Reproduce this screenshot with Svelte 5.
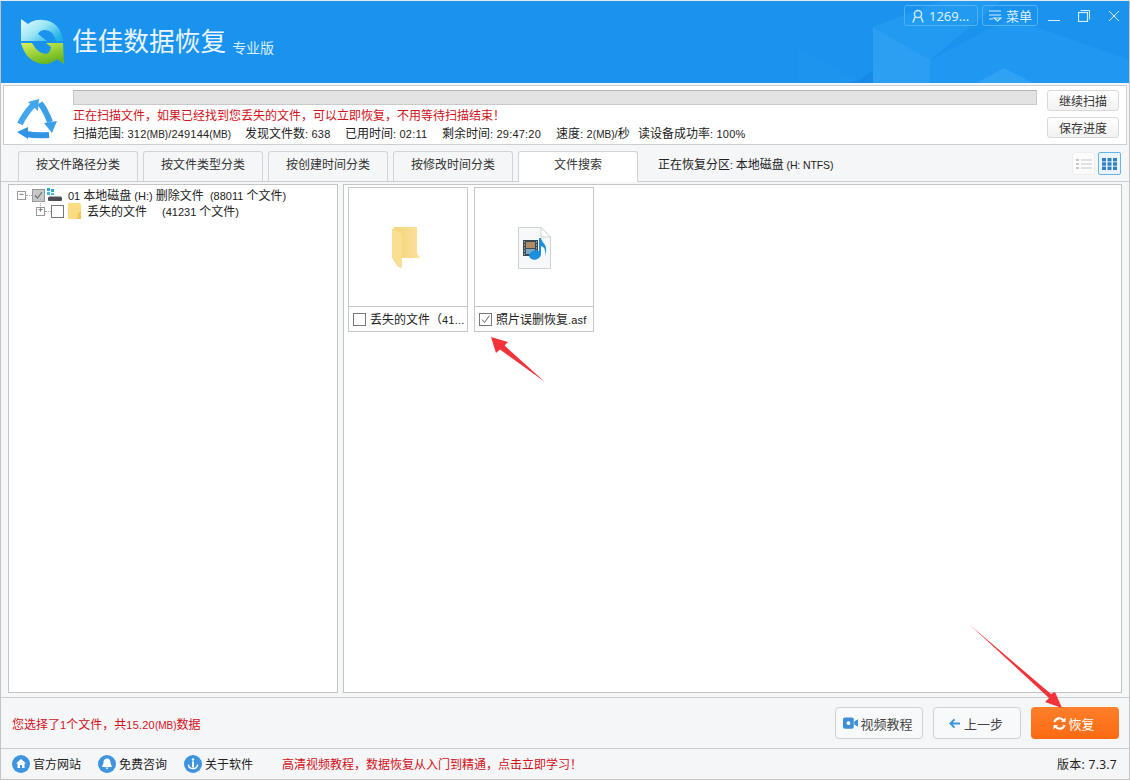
<script>
let tabs = ['按文件路径分类', '按文件类型分类', '按创建时间分类', '按修改时间分类', '文件搜索']
let active = 4
let stats = [
  ['扫描范围: 312(MB)/249144(MB)', 172],
  ['发现文件数: 638', 100],
  ['已用时间: 02:11', 97],
  ['剩余时间: 29:47:20', 114],
  ['速度: 2(MB)/秒', 82],
  ['读设备成功率: 100%', 120]
]

// latin runs are set smaller than the cjk around them, (MB) smaller still
function runs(s) {
  return s.split(/(\(MB\)|(?:(?!\(MB\))[\x20-\x7e])+)/)
}
</script>

{#snippet mix(text)}
  {#each runs(text) as r, i}{#if i % 2}<span class="n" class:mb={r === '(MB)'}>{r}</span>{:else}{r}{/if}{/each}
{/snippet}

<div class="win">
  <header class="head">
    <svg class="cubes" width="1128" height="82" viewBox="0 1 1128 82">
      <path d="M797 48 L857 81 L857 83 L797 83 Z" fill="#1d95ee" />
      <path d="M857 81 L872 70 L872 83 L845 83 Z" fill="#1889e6" />
      <path d="M872 27 L940 1 L1000 1 L929 60 Z" fill="#219af2" />
      <path d="M872 27 L929 60 L929 83 L872 83 Z" fill="#2d9ff3" />
      <path d="M929 60 L1010 18 L1128 60 L1128 83 L929 83 Z" fill="#1f98f1" />
      <path d="M975 83 L1003 68 L1032 83 Z" fill="#2fa2f4" />
    </svg>
    <svg class="logo" width="46" height="50" viewBox="20 17 46 50">
      <defs>
        <linearGradient id="lgTop" x1="0" y1="0" x2="1" y2=".7">
          <stop offset="0" stop-color="#e6fcfd" />
          <stop offset=".5" stop-color="#9fe6f5" />
          <stop offset="1" stop-color="#22b2e4" />
        </linearGradient>
        <linearGradient id="lgBot" x1="0" y1="0" x2=".5" y2="1">
          <stop offset="0" stop-color="#d6f05c" />
          <stop offset="1" stop-color="#69b61c" />
        </linearGradient>
      </defs>
      <path d="M21 19 L28 24 Q35 19 43 20 Q60 21 63 41 L56 41 Q53 30 45 30 Q40 30 38 34 L47 41 L21 41 Z" fill="url(#lgTop)" />
      <path d="M21 43 H32 Q38 54 46 54 Q50 53 51 47 L46 43 H63 L64 64 L57 59 Q50 65 43 64 Q26 62 21 43 Z" fill="url(#lgBot)" />
    </svg>
    <span class="brand">佳佳数据恢复</span>
    <span class="edition">专业版</span>
    <div class="winbtns">
      <button class="hbtn user">
        <svg width="14" height="14" viewBox="0 0 14 14" fill="none" stroke="#cfe9fd" stroke-width="1.5"><circle cx="7" cy="5" r="3.6" /><path d="M2 13.5 L4 8 M12 13.5 L10 8" /></svg>
        1269...
      </button>
      <button class="hbtn menu">
        <svg width="14" height="13" viewBox="0 0 14 13" fill="none" stroke="#cfe9fd" stroke-width="1.2"><path d="M1 2 H13 M1 6 H13 M1 10 H5 M6 9 H13 L9.5 12 Z" /></svg>
        菜单
      </button>
      <svg class="ctl" width="12" height="12" viewBox="0 0 12 12" stroke="#d6edfe" fill="none"><path d="M0 10.5 H12" /></svg>
      <svg class="ctl" width="12" height="12" viewBox="0 0 12 12" stroke="#d6edfe" fill="none"><rect x=".5" y="2.5" width="9" height="9" stroke-width="1.2" /><path d="M2.5 .5 H11.5 V9.5" /></svg>
      <svg class="ctl" width="12" height="12" viewBox="0 0 12 12" stroke="#d6edfe" fill="none"><path d="M1 1 L11 11 M11 1 L1 11" /></svg>
    </div>
  </header>

  <section class="scan">
    <svg class="scanicon" width="46" height="46" viewBox="0 0 46 46" fill="#3a9fe8">
      <path d="M4 27 Q8 18 17 8" fill="none" stroke="#42a6ec" stroke-width="6" />
      <path d="M12 5 L23 2 L22 14 Z" fill="#42a6ec" />
      <path d="M24 6 Q30 14 34 25" fill="none" stroke="#3a9fe8" stroke-width="6" />
      <path d="M28 26 L41 24 L36 36 Z" />
      <path d="M33 38 Q20 39 10 37" fill="none" stroke="#3194e4" stroke-width="6" />
      <path d="M12 30 L1 35 L12 42 Z" fill="#3194e4" />
    </svg>
    <div class="scanbody">
      <div class="progress"></div>
      <div class="notice">正在扫描文件，如果已经找到您丢失的文件，可以立即恢复，不用等待扫描结束！</div>
      <div class="stats">
        {#each stats as s}
          <div class="stat" style="width:{s[1]}px">{@render mix(s[0])}</div>
        {/each}
      </div>
    </div>
    <div class="scanbtns">
      <button class="sbtn">继续扫描</button>
      <button class="sbtn">保存进度</button>
    </div>
  </section>

  <nav class="tabbar">
    {#each tabs as t, i}
      <div class="tab" class:on={i === active}>{t}</div>
    {/each}
    <span class="part">{@render mix('正在恢复分区: 本地磁盘 (H: NTFS)')}</span>
    <div class="views">
      <div class="view">
        <svg width="16" height="12" viewBox="0 0 16 12" fill="#c4c8cc"><rect x="0" y="1" width="3" height="2" /><rect x="0" y="5" width="3" height="2" /><rect x="0" y="9" width="3" height="2" /><rect x="5" y="1.5" width="11" height="1" /><rect x="5" y="5.5" width="11" height="1" /><rect x="5" y="9.5" width="11" height="1" /></svg>
      </div>
      <div class="view on">
        <svg width="15" height="12" viewBox="0 0 15 12" fill="#2f80c8"><rect x="0" y="0" width="4" height="3.4" /><rect x="5.5" y="0" width="4" height="3.4" /><rect x="11" y="0" width="4" height="3.4" /><rect x="0" y="4.3" width="4" height="3.4" /><rect x="5.5" y="4.3" width="4" height="3.4" /><rect x="11" y="4.3" width="4" height="3.4" /><rect x="0" y="8.6" width="4" height="3.4" /><rect x="5.5" y="8.6" width="4" height="3.4" /><rect x="11" y="8.6" width="4" height="3.4" /></svg>
      </div>
    </div>
  </nav>

  <main class="work">
    <aside class="tree">
      <div class="row">
        <span class="exp">−</span>
        <span class="dots"></span>
        <span class="chk grey">
          <svg width="11" height="11" viewBox="0 0 11 11" fill="none" stroke="#6f6f6f" stroke-width="1.2"><path d="M2 5.5 L4.5 8 L9 2" /></svg>
        </span>
        <svg class="disk" width="15" height="14" viewBox="0 0 15 14"><rect x="0" y="0" width="3" height="3" fill="#2aa6d8" /><rect x="4" y="1" width="3" height="3" fill="#2aa6d8" /><rect x="0" y="4" width="3" height="3" fill="#46b8e2" /><rect x="4" y="5" width="3" height="2" fill="#46b8e2" /><rect x="1" y="9" width="14" height="4" rx="1" fill="#4b4f55" /><rect x="2" y="8" width="12" height="1" fill="#a9adb2" /></svg>
        <span class="name">{@render mix('01 本地磁盘 (H:) 删除文件  (88011 个文件)')}</span>
      </div>
      <div class="row sub">
        <span class="exp">+</span>
        <span class="dots"></span>
        <span class="chk"></span>
        <svg class="mini" width="13" height="16" viewBox="0 0 13 16"><path d="M0 1 Q0 0 1 0 H11 Q13 0 13 2 V16 H1 Q0 16 0 15 Z" fill="#fbdc83" /><path d="M10 10 L13 8 V16 H9 Z" fill="#f3c558" /></svg>
        <span class="name lost">丢失的文件</span>
        <span class="name">{@render mix('(41231 个文件)')}</span>
      </div>
    </aside>

    <div class="files">
      <div class="tile">
        <div class="thumb">
          <svg class="folder" width="28" height="41" viewBox="0 0 28 41">
            <defs>
              <linearGradient id="fb" x1="0" y1="0" x2="1" y2="0">
                <stop offset="0" stop-color="#f5d377" />
                <stop offset="1" stop-color="#fbe29c" />
              </linearGradient>
            </defs>
            <path d="M2 0 H25 V26 L28 31 H2 Z" fill="url(#fb)" />
            <path d="M0 1 L10 7 V41 L6 40 L0 31 Z" fill="#fadf92" />
          </svg>
        </div>
        <div class="cap">
          <span class="chk"></span>
          <span class="capt">丢失的文件（{@render mix('41...')}</span>
        </div>
      </div>
      <div class="tile">
        <div class="thumb">
          <svg class="media" width="33" height="42" viewBox="0 0 33 42">
            <path d="M.5 .5 H23 L32.5 10 V41.5 H.5 Z" fill="#f7f8fa" stroke="#cfd1d3" />
            <path d="M23 .5 V10 H32.5 Z" fill="#fff" stroke="#cfd1d3" />
            <rect x="5" y="13" width="15" height="16" fill="#3a4a55" />
            <rect x="8" y="15" width="9" height="6" fill="#b28a66" />
            <rect x="8" y="22" width="9" height="5" fill="#7fa9c2" />
            <path d="M6 15 H7 M6 18 H7 M6 21 H7 M6 24 H7 M6 27 H7 M18 15 H19 M18 18 H19 M18 21 H19 M18 24 H19 M18 27 H19" stroke="#dfe5ea" />
            <ellipse cx="17" cy="28" rx="6" ry="4.6" fill="#1d8fdc" transform="rotate(-15 17 28)" />
            <path d="M21 11 H23 C24 17 31 17 27 29 C28 22 26 20 23 19 V28 H21 Z" fill="#1d8fdc" />
          </svg>
        </div>
        <div class="cap">
          <span class="chk">
            <svg width="11" height="11" viewBox="0 0 11 11" fill="none" stroke="#666" stroke-width="1"><path d="M2 5.5 L4.5 8.5 L9.5 1.5" /></svg>
          </span>
          <span class="capt">{@render mix('照片误删恢复.asf')}</span>
        </div>
      </div>
    </div>
  </main>

  <div class="action">
    <span class="picked">{@render mix('您选择了1个文件，共15.20(MB)数据')}</span>
    <button class="abtn">
      <svg width="15" height="12" viewBox="0 0 16 12" fill="#3f8fd6"><rect x="0" y="0" width="11.5" height="12" rx="2" /><path d="M12 4.5 L16 2 V10 L12 7.5 Z" /><circle cx="5.8" cy="6" r="2" fill="#fff" /></svg>
      视频教程
    </button>
    <button class="abtn">
      <svg width="11" height="11" viewBox="0 0 12 11" fill="none" stroke="#3f94e0" stroke-width="2.2"><path d="M6 1 L1.5 5.5 L6 10 M2 5.5 H12" /></svg>
      <span class="stepl">上一步</span>
    </button>
    <button class="abtn go">
      <svg width="13" height="13" viewBox="0 0 13 13" fill="none" stroke="#fff" stroke-width="2.2"><path d="M1.5 5 A5 5 0 0 1 10.5 3.5 M11.5 8 A5 5 0 0 1 2.5 9.5" /><path d="M12.5 .5 V5 H8 Z M.5 12.5 V8 H5 Z" fill="#fff" stroke="none" /></svg>
      恢复
    </button>
  </div>

  <footer class="status">
    <span class="link">
      <svg width="18" height="18" viewBox="0 0 18 18"><circle cx="9" cy="9" r="9" fill="#3f94e0" /><path d="M9 4 L14 8.5 H12.5 V13 H10 V10 H8 V13 H5.5 V8.5 H4 Z" fill="#fff" /></svg>
      官方网站
    </span>
    <span class="link">
      <svg width="18" height="18" viewBox="0 0 18 18"><circle cx="9" cy="9" r="9" fill="#3f94e0" /><path d="M9 3.5 C12 3.5 12.5 6 12.5 8 L14 12 H4 L5.5 8 C5.5 6 6 3.5 9 3.5 Z M7.5 12.5 H10.5 L9 14.5 Z" fill="#fff" /></svg>
      免费咨询
    </span>
    <span class="link">
      <svg width="18" height="18" viewBox="0 0 18 18"><circle cx="9" cy="9" r="9" fill="#3f94e0" /><circle cx="9" cy="4.5" r="1.2" fill="#fff" /><rect x="8" y="6.5" width="2" height="6" fill="#fff" /><path d="M4.5 9.5 C4.5 15 13.5 15 13.5 9.5" fill="none" stroke="#fff" stroke-width="1.4" /></svg>
      关于软件
    </span>
    <span class="promo">高清视频教程，数据恢复从入门到精通，点击立即学习！</span>
    <span class="version">版本: 7.3.7</span>
  </footer>

  <svg class="pointer" width="1128" height="778" viewBox="1 1 1128 778">
    <path d="M491 337 L508 342 L504.5 345.5 L545 382 L500 349.5 L496 353 Z" fill="#f2333a" />
    <path d="M970 625 L1051 694 L1055 692 L1062 708 L1045 702 L1049 698 Z" fill="#f2333a" />
  </svg>
</div>

<style>
:global(body) {
  margin: 0;
  background: #fff;
}
.win {
  position: relative;
  box-sizing: border-box;
  width: 1130px;
  height: 780px;
  display: flex;
  flex-direction: column;
  border: 1px solid #c4c4c4;
  border-top-color: #e8e8e8;
  background: #f5f6f8;
  font-family: "Noto Sans", "Noto Sans CJK SC", sans-serif;
  font-size: 12px;
  color: #222;
  overflow: hidden;
}
.n {
  font-family: "Liberation Sans", sans-serif;
  font-size: 11px;
  letter-spacing: .2px;
  white-space: pre;
}
.n.mb {
  font-size: 10px;
  letter-spacing: 0;
}
.part .n {
  letter-spacing: -.1px;
  font-size: 10.5px;
}
.name .n {
  letter-spacing: 0;
}
button {
  font: inherit;
  padding: 0;
  cursor: pointer;
}
.head {
  position: relative;
  height: 82px;
  flex: none;
  display: flex;
  align-items: flex-start;
  background: #1a93ef;
  color: #fff;
}
.cubes {
  position: absolute;
  left: 0;
  top: 0;
}
.logo {
  position: relative;
  margin: 16px 0 0 19px;
}
.brand {
  position: relative;
  margin: 21px 0 0 6px;
  font-size: 25.7px;
  line-height: 40px;
  color: #eaf6ff;
}
.edition {
  position: relative;
  margin: 37px 0 0 6px;
  font-size: 14px;
  line-height: 20px;
  color: #d8eefe;
}
.winbtns {
  position: absolute;
  right: 9px;
  top: 4px;
  display: flex;
  align-items: center;
}
.hbtn {
  height: 21px;
  display: flex;
  align-items: center;
  gap: 4px;
  box-sizing: border-box;
  border: 1px solid #55b0f2;
  border-radius: 3px;
  background: transparent;
  color: #dcf0ff;
  font-size: 13px;
}
.user {
  width: 74px;
  padding-left: 6px;
  margin-right: 4px;
}
.menu {
  width: 56px;
  padding-left: 5px;
  margin-right: 10px;
}
.ctl {
  margin-right: 18px;
}
.ctl:last-child {
  margin-right: 0;
}
.scan {
  flex: none;
  height: 60px;
  box-sizing: border-box;
  margin: 2px 2px 0;
  display: flex;
  background: #fff;
  border: 1px solid #cdcdcd;
}
.scanicon {
  flex: none;
  margin: 11px 11px 0 12px;
}
.scanbody {
  flex: 1;
  min-width: 0;
}
.progress {
  height: 15px;
  box-sizing: border-box;
  margin-top: 4px;
  background: #e3e3e3;
  border: 1px solid #c9c9c9;
  border-top-color: #b5b5b5;
}
.notice {
  margin-top: 2px;
  line-height: 18px;
  color: #d1101a;
}
.stats {
  display: flex;
  line-height: 18px;
  white-space: nowrap;
}
.stat {
  flex: none;
}
.scanbtns {
  flex: none;
  width: 72px;
  margin: 4px 7px 0 10px;
  display: flex;
  flex-direction: column;
  gap: 6px;
}
.sbtn {
  height: 21px;
  border: 1px solid #d9d9d9;
  border-radius: 3px;
  background: linear-gradient(#fff, #f2f2f2);
  color: #333;
}
.tabbar {
  flex: none;
  height: 30px;
  margin-top: 6px;
  padding-left: 17px;
  display: flex;
  gap: 5px;
  align-items: flex-start;
  position: relative;
}
.tab {
  width: 120px;
  height: 30px;
  box-sizing: border-box;
  border: 1px solid #d3d3d3;
  border-bottom: 0;
  border-radius: 3px 3px 0 0;
  text-align: center;
  line-height: 26px;
  background: #f5f6f8;
  color: #333;
}
.tab.on {
  position: relative;
  z-index: 1;
  height: 31px;
  background: #fff;
}
.part {
  margin-left: 15px;
  line-height: 28px;
}
.views {
  margin-left: auto;
  margin-right: 8px;
  margin-top: 1px;
  display: flex;
  gap: 3px;
}
.view {
  width: 23px;
  height: 23px;
  box-sizing: border-box;
  display: flex;
  align-items: center;
  justify-content: center;
  border: 1px solid #eceef0;
  background: #fbfbfb;
  border-radius: 2px;
}
.view.on {
  border-color: #6ab2e8;
  background: #eaf4fc;
}
.work {
  height: 517px;
  flex: none;
  box-sizing: border-box;
  display: flex;
  gap: 5px;
  padding: 2px 7px 4px;
  border-top: 1px solid #cdcdcd;
  border-bottom: 1px solid #cdcdcd;
}
.tree, .files {
  box-sizing: border-box;
  background: #fff;
  border: 1px solid #c4c4c4;
}
.tree {
  width: 330px;
  flex: none;
  padding-top: 2px;
}
.row {
  height: 16px;
  display: flex;
  align-items: center;
  padding-left: 8px;
  white-space: nowrap;
}
.row.sub {
  padding-left: 27px;
}
.exp {
  width: 9px;
  height: 9px;
  box-sizing: border-box;
  border: 1px solid #999;
  font: 9px/7px "Liberation Mono", monospace;
  text-align: center;
  color: #444;
  flex: none;
}
.sub .exp {
  position: relative;
}
.sub .exp::before {
  content: "";
  position: absolute;
  left: 3px;
  top: -9px;
  height: 7px;
  border-left: 1px dotted #aaa;
}
.dots {
  width: 6px;
  border-top: 1px dotted #aaa;
  flex: none;
}
.chk {
  width: 13px;
  height: 13px;
  box-sizing: border-box;
  border: 1px solid #777;
  background: #fff;
  display: flex;
  align-items: center;
  justify-content: center;
  flex: none;
}
.chk.grey {
  background: #c8c8c8;
  border-color: #999;
}
.disk {
  margin: 0 6px 0 2px;
  flex: none;
}
.mini {
  margin: 0 6px 0 4px;
  flex: none;
}
.name {
  color: #222;
}
.lost {
  width: 75px;
}
.files {
  flex: 1;
  display: flex;
  align-items: flex-start;
  gap: 6px;
  padding: 2px 4px;
}
.tile {
  width: 120px;
  height: 145px;
  box-sizing: border-box;
  border: 1px solid #c6c6c6;
  display: flex;
  flex-direction: column;
}
.thumb {
  height: 118px;
  flex: none;
  display: flex;
  align-items: center;
  justify-content: center;
  border-bottom: 1px solid #c6c6c6;
}
.folder {
  margin-right: 5px;
}
.media {
  margin-top: 2px;
}
.cap {
  flex: 1;
  display: flex;
  align-items: center;
  gap: 4px;
  padding-left: 4px;
  white-space: nowrap;
}
.action {
  flex: 1;
  display: flex;
  align-items: center;
  padding: 0 10px 0 11px;
  gap: 10px;
}
.picked {
  margin: 2px auto 0 0;
  color: #d1101a;
}
.abtn {
  width: 88px;
  height: 32px;
  display: flex;
  align-items: center;
  justify-content: center;
  gap: 2px;
  box-sizing: border-box;
  border: 1px solid #cfd1d4;
  border-radius: 4px;
  padding-right: 2px;
  background: #f8f9fa;
  color: #444;
  font-size: 13px;
}
.stepl {
  margin-left: 2px;
}
.abtn.go {
  border: 0;
  background: linear-gradient(#ff7f2a, #fa6a12);
  color: #fff;
}
.status {
  flex: none;
  height: 31px;
  box-sizing: border-box;
  display: flex;
  align-items: center;
  padding: 0 12px 0 11px;
  border-top: 1px solid #cdcdcd;
  white-space: nowrap;
}
.link {
  display: flex;
  align-items: center;
  gap: 3px;
  width: 86px;
}
.promo {
  margin-left: 12px;
  color: #d1101a;
}
.version {
  margin-left: auto;
  letter-spacing: .3px;
}
.pointer {
  position: absolute;
  left: 0;
  top: 0;
  pointer-events: none;
  z-index: 3;
}
</style>
